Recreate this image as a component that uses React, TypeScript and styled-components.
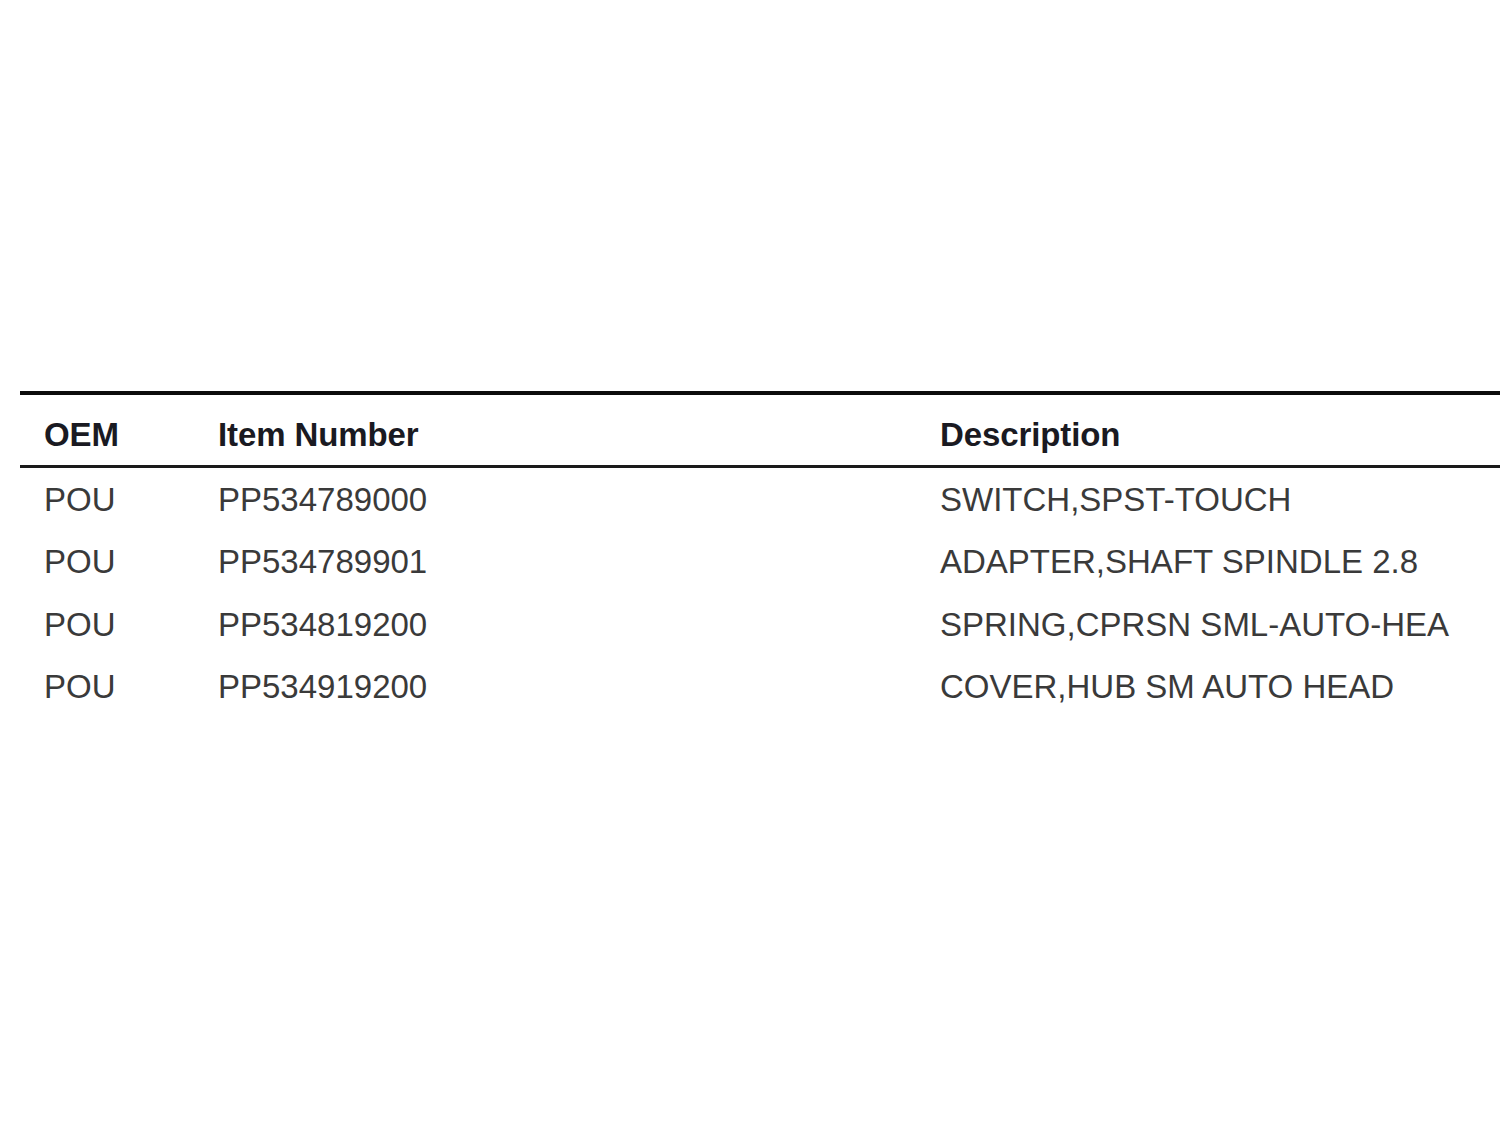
import styled, { createGlobalStyle } from "styled-components";

const parts = [
  { oem: "POU", item: "PP534789000", description: "SWITCH,SPST-TOUCH" },
  { oem: "POU", item: "PP534789901", description: "ADAPTER,SHAFT SPINDLE 2.8" },
  { oem: "POU", item: "PP534819200", description: "SPRING,CPRSN SML-AUTO-HEA" },
  { oem: "POU", item: "PP534919200", description: "COVER,HUB SM AUTO HEAD" },
];

function App() {
  return (
    <Page>
      <GlobalStyle />
      <PartsTable>
        <HeaderRow>
          <HeadCell>OEM</HeadCell>
          <HeadCell>Item Number</HeadCell>
          <HeadCell>Description</HeadCell>
        </HeaderRow>
        {parts.map((p) => (
          <Row key={p.item}>
            <Cell>{p.oem}</Cell>
            <Cell>{p.item}</Cell>
            <Cell>{p.description}</Cell>
          </Row>
        ))}
      </PartsTable>
    </Page>
  );
}

const GlobalStyle = createGlobalStyle`
  html, body {
    margin: 0;
    padding: 0;
    background: #ffffff;
  }
  body {
    font-family: "Liberation Sans", Arial, sans-serif;
    width: 1500px;
    height: 1125px;
    overflow: hidden;
  }
`;

const Page = styled.div`
  padding: 391px 0 0 20px;
`;

const PartsTable = styled.div`
  display: flex;
  flex-direction: column;
  border-top: 4px solid #0c0c0c;
`;

const Row = styled.div`
  display: grid;
  grid-template-columns: 174px 722px 1fr;
  height: 62.5px;
  align-items: center;
`;

const HeaderRow = styled(Row)`
  height: 73px;
  padding-top: 8px;
  box-sizing: border-box;
  border-bottom: 3px solid #1a1a1a;
`;

const Cell = styled.div`
  padding-left: 24px;
  font-size: 33px;
  line-height: 1;
  color: #3a3a3a;
  white-space: nowrap;
`;

const HeadCell = styled(Cell)`
  font-weight: bold;
  color: #1a1a22;
  letter-spacing: -0.1px;
`;

export default App;
